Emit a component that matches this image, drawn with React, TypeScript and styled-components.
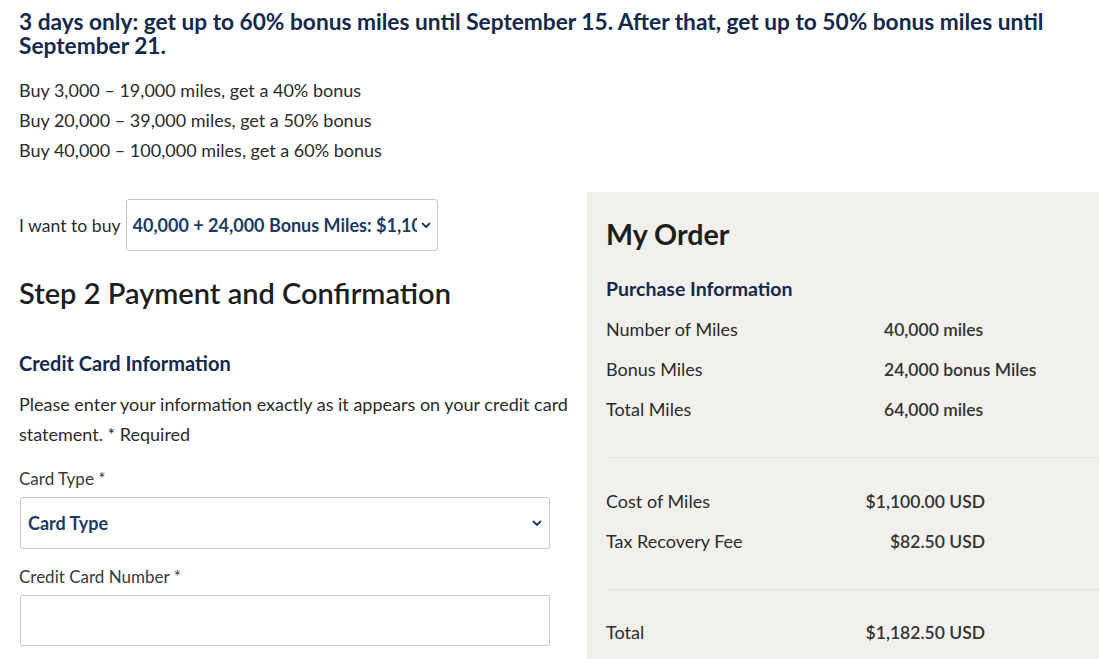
import React from "react";
import styled, { createGlobalStyle } from "styled-components";

const GlobalStyle = createGlobalStyle`
  html, body { margin: 0; padding: 0; background: #ffffff; }
  body { font-family: Lato, "Noto Sans", sans-serif; color: #2b2b2b; overflow: hidden; }
  * { box-sizing: border-box; }
`;

const Page = styled.div`
  padding: 10px 0 0 19px;
  width: 1099px;
`;

const PromoTitle = styled.h1`
  margin: 0;
  font-size: 22.7px;
  line-height: 24px;
  font-weight: 700;
  color: #14294b;
  width: 1060px;
`;

const BonusList = styled.div`
  margin-top: 17px;
  display: flex;
  flex-direction: column;
`;

const BonusLine = styled.div`
  font-size: 18px;
  line-height: 30px;
  color: #2b2b2b;
`;

const Columns = styled.div`
  margin-top: 27px;
  display: grid;
  grid-template-columns: 552px 512px;
  column-gap: 16px;
  align-items: start;
`;

const LeftCol = styled.div`
  padding-top: 7px;
  display: flex;
  flex-direction: column;
`;

const BuyRow = styled.div`
  display: flex;
  align-items: center;
  gap: 5px;
`;

const BuyLabel = styled.span`
  font-size: 17.6px;
  color: #2b2b2b;
`;

const SelectBox = styled.div<{ $width: number; $height: number; $pad: number }>`
  width: ${(p) => p.$width}px;
  height: ${(p) => p.$height}px;
  border: 1px solid #c9c9c9;
  border-radius: 3px;
  background: #fff;
  display: flex;
  align-items: center;
  padding: 0 ${(p) => p.$pad}px 0 ${(p) => p.$pad}px;
  gap: 4px;
`;

const SelectValue = styled.span`
  flex: 1;
  font-size: 18px;
  font-weight: 700;
  color: #1d3a63;
  white-space: nowrap;
  overflow: hidden;
`;

const StepTitle = styled.h2`
  margin: 26px 0 0;
  font-size: 29px;
  line-height: 32px;
  font-weight: 600;
  color: #1e1e1e;
`;

const SectionTitle = styled.h3`
  margin: 42px 0 0;
  font-size: 20px;
  line-height: 24px;
  font-weight: 700;
  color: #14294b;
`;

const Intro = styled.p`
  margin: 14px 0 0;
  font-size: 18px;
  line-height: 30px;
  color: #2b2b2b;
`;

const FieldLabel = styled.label<{ $top: number }>`
  display: block;
  margin-top: ${(p) => p.$top}px;
  font-size: 17px;
  line-height: 20px;
  color: #3a3a3a;
`;

const Field = styled.div`
  margin-top: 8px;
  margin-left: 1px;
`;

const TextInput = styled.div`
  width: 530px;
  height: 51px;
  border: 1px solid #c9c9c9;
  border-radius: 2px;
  background: #fff;
`;

const OrderPanel = styled.aside`
  background: #f2f0ed;
  padding: 26px 0 40px 19px;
  min-height: 480px;
`;

const OrderTitle = styled.h2`
  margin: 0;
  font-size: 28.6px;
  line-height: 32px;
  font-weight: 700;
  color: #1e1e1e;
`;

const OrderSubtitle = styled.h3`
  margin: 28px 0 9px;
  font-size: 19.5px;
  line-height: 22px;
  font-weight: 700;
  color: #14294b;
`;

const OrderRow = styled.div`
  display: flex;
  align-items: center;
  height: 40px;
  font-size: 18px;
  color: #2b2b2b;
`;

const RowLabel = styled.span<{ $width: number }>`
  width: ${(p) => p.$width}px;
  flex: none;
`;

const RowValue = styled.span<{ $right?: boolean; $width?: number }>`
  font-weight: 600;
  font-size: 17.5px;
  color: #333333;
  ${(p) => (p.$right ? `text-align: right; width: ${p.$width}px;` : "")}
`;

const Divider = styled.hr<{ $top: number; $bottom: number }>`
  border: none;
  height: 1px;
  background: #e7e5e1;
  margin: ${(p) => p.$top}px 0 ${(p) => p.$bottom}px;
`;

const Chevron = ({ size = 10 }: { size?: number }) => (
  <svg width={size} height={size} viewBox="0 0 10 10" fill="none">
    <path d="M1.5 3.5 L5 7 L8.5 3.5" stroke="#1d3a63" strokeWidth="1.8" strokeLinecap="round" strokeLinejoin="round" />
  </svg>
);

const mileRows = [
  ["Number of Miles", "40,000 miles"],
  ["Bonus Miles", "24,000 bonus Miles"],
  ["Total Miles", "64,000 miles"],
];

const costRows = [
  ["Cost of Miles", "$1,100.00 USD"],
  ["Tax Recovery Fee", "$82.50 USD"],
];

export default function App() {
  return (
    <>
      <GlobalStyle />
      <Page>
        <PromoTitle>
          3 days only: get up to 60% bonus miles until September 15. After that, get up to 50% bonus miles until
          September 21.
        </PromoTitle>
        <BonusList>
          <BonusLine>Buy 3,000 – 19,000 miles, get a 40% bonus</BonusLine>
          <BonusLine>Buy 20,000 – 39,000 miles, get a 50% bonus</BonusLine>
          <BonusLine>Buy 40,000 – 100,000 miles, get a 60% bonus</BonusLine>
        </BonusList>
        <Columns>
          <LeftCol>
            <BuyRow>
              <BuyLabel>I want to buy</BuyLabel>
              <SelectBox $width={312} $height={52} $pad={6}>
                <SelectValue>40,000 + 24,000 Bonus Miles: $1,100.00</SelectValue>
                <Chevron />
              </SelectBox>
            </BuyRow>
            <StepTitle>Step 2 Payment and Confirmation</StepTitle>
            <SectionTitle>Credit Card Information</SectionTitle>
            <Intro>Please enter your information exactly as it appears on your credit card statement. * Required</Intro>
            <FieldLabel $top={20}>Card Type *</FieldLabel>
            <Field>
              <SelectBox $width={530} $height={52} $pad={7}>
                <SelectValue>Card Type</SelectValue>
                <Chevron />
              </SelectBox>
            </Field>
            <FieldLabel $top={18}>Credit Card Number *</FieldLabel>
            <Field>
              <TextInput />
            </Field>
          </LeftCol>
          <OrderPanel>
            <OrderTitle>My Order</OrderTitle>
            <OrderSubtitle>Purchase Information</OrderSubtitle>
            {mileRows.map(([l, v]) => (
              <OrderRow key={l}>
                <RowLabel $width={278}>{l}</RowLabel>
                <RowValue>{v}</RowValue>
              </OrderRow>
            ))}
            <Divider $top={28} $bottom={23} />
            {costRows.map(([l, v]) => (
              <OrderRow key={l}>
                <RowLabel $width={240}>{l}</RowLabel>
                <RowValue $right $width={139}>{v}</RowValue>
              </OrderRow>
            ))}
            <Divider $top={28} $bottom={22} />
            <OrderRow>
              <RowLabel $width={240}>Total</RowLabel>
              <RowValue $right $width={139}>$1,182.50 USD</RowValue>
            </OrderRow>
          </OrderPanel>
        </Columns>
      </Page>
    </>
  );
}
